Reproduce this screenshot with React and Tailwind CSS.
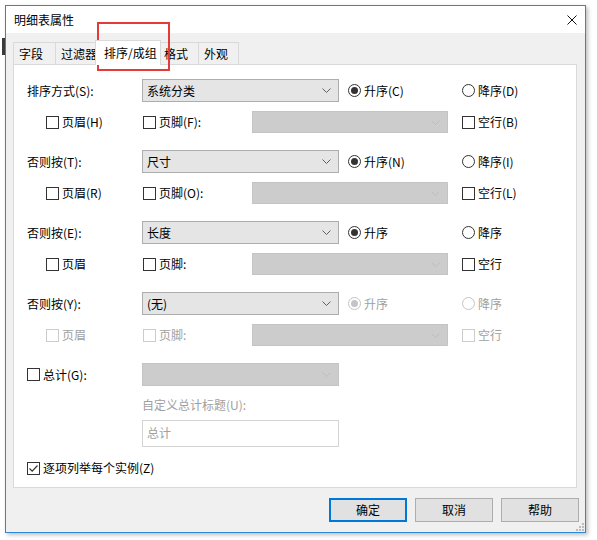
import React from 'react';

function Chevron({ light }) {
  return (
    <svg width="9" height="5" viewBox="0 0 9 5" className="shrink-0">
      <path d="M0.5 0.5 L4.5 4.5 L8.5 0.5" fill="none" stroke={light ? '#bdbdbd' : '#606060'} strokeWidth="1" />
    </svg>
  );
}

function Select({ value, width, disabled, height = 'h-[23px]' }) {
  return (
    <div
      className={`${width} ${height} flex items-center justify-between pl-[4px] pr-[7px] border ${
        disabled ? 'bg-[#cccccc] border-[#c4c4c4]' : 'bg-[#e5e5e5] border-[#adadad]'
      }`}
    >
      <span>{value}</span>
      <Chevron light={disabled} />
    </div>
  );
}

function Check({ label, checked, disabled }) {
  return (
    <span className={`flex items-center gap-[3px] whitespace-nowrap ${disabled ? 'text-[#a0a0a0]' : 'text-black'}`}>
      <span
        className={`w-[13px] h-[13px] border bg-white flex items-center justify-center shrink-0 ${
          disabled ? 'border-[#cccccc]' : 'border-[#333333]'
        }`}
      >
        {checked && (
          <svg width="11" height="11" viewBox="0 0 11 11">
            <path d="M1.5 5.5 L4.2 8.2 L9.5 2.5" fill="none" stroke="#333333" strokeWidth="1.2" />
          </svg>
        )}
      </span>
      <span>{label}</span>
    </span>
  );
}

function Radio({ label, checked, disabled }) {
  return (
    <span className={`flex items-center gap-[3px] whitespace-nowrap ${disabled ? 'text-[#a0a0a0]' : 'text-black'}`}>
      <span
        className={`w-[13px] h-[13px] rounded-full border bg-white flex items-center justify-center shrink-0 ${
          disabled ? 'border-[#c4c4c4]' : 'border-[#333333]'
        }`}
      >
        {checked && (
          <span className={`w-[7px] h-[7px] rounded-full ${disabled ? 'bg-[#c4c4c4]' : 'bg-[#333333]'}`} />
        )}
      </span>
      <span>{label}</span>
    </span>
  );
}

function Section({ label, value, asc, desc, header, footer, blank, dim }) {
  return (
    <div>
      <div className="flex items-center h-[23px]">
        <span className="w-[115px]">{label}</span>
        <Select value={value} width="w-[197px]" />
        <span className="w-[9px]" />
        <span className="w-[114px]">
          <Radio label={asc} checked disabled={dim} />
        </span>
        <Radio label={desc} disabled={dim} />
      </div>
      <div className="flex items-center h-[22px] mt-[9px]">
        <span className="w-[19px]" />
        <span className="w-[97px]">
          <Check label={header} disabled={dim} />
        </span>
        <span className="w-[109px]">
          <Check label={footer} disabled={dim} />
        </span>
        <Select width="w-[196px]" height="h-[22px]" disabled />
        <span className="w-[14px]" />
        <Check label={blank} disabled={dim} />
      </div>
    </div>
  );
}

const sections = [
  { label: '排序方式(S):', value: '系统分类', asc: '升序(C)', desc: '降序(D)', header: '页眉(H)', footer: '页脚(F):', blank: '空行(B)' },
  { label: '否则按(T):', value: '尺寸', asc: '升序(N)', desc: '降序(I)', header: '页眉(R)', footer: '页脚(O):', blank: '空行(L)' },
  { label: '否则按(E):', value: '长度', asc: '升序', desc: '降序', header: '页眉', footer: '页脚:', blank: '空行' },
  { label: '否则按(Y):', value: '(无)', asc: '升序', desc: '降序', header: '页眉', footer: '页脚:', blank: '空行', dim: true },
];

const tabs = [
  { name: '字段', w: 'w-[43px]' },
  { name: '过滤器', w: 'w-[42px]' },
  { name: '排序/成组', w: 'w-[66px]', active: true },
  { name: '格式', w: 'w-[41px]' },
  { name: '外观', w: 'w-[41px]' },
];

export default function App() {
  return (
    <div className="relative w-[597px] h-[540px] bg-white overflow-hidden text-[12px] leading-none text-black font-['Noto_Sans_CJK_SC','Microsoft_YaHei',sans-serif]">
      {/* window behind */}
      <div className="absolute left-[2px] top-[38px] w-[3px] h-[17px] bg-[#3a3a3a]" />

      <div className="ml-[5px] mt-[5px] w-[581px] h-[528px] border border-[#2b88d8] bg-[#f0f0f0] flex flex-col shadow-[2px_2px_4px_rgba(0,0,0,0.25)]">
        {/* title bar */}
        <div className="h-[27px] bg-white flex items-center justify-between pl-[8px] pr-[8px]">
          <span>明细表属性</span>
          <svg width="10" height="10" viewBox="0 0 10 10">
            <path d="M0.5 0.5 L9.5 9.5 M9.5 0.5 L0.5 9.5" stroke="#111" strokeWidth="1" />
          </svg>
        </div>

        <div className="flex flex-col pl-[7px] pr-[8px] pt-[7px]">
          {/* tabs */}
          <div className="flex items-end h-[24px]">
            {tabs.map((t) =>
              t.active ? (
                <div
                  key={t.name}
                  className={`${t.w} -mx-[2px] h-[25px] -mb-px relative z-10 bg-white border border-b-0 border-[#d9d9d9] flex items-center pl-[8px] whitespace-nowrap`}
                >
                  {t.name}
                </div>
              ) : (
                <div
                  key={t.name}
                  className={`${t.w} h-[22px] bg-[#f0f0f0] border border-b-0 border-[#d9d9d9] -ml-px first:ml-0 flex items-center pl-[5px] whitespace-nowrap overflow-hidden`}
                >
                  {t.name}
                </div>
              )
            )}
          </div>

          {/* panel */}
          <div className="h-[424px] bg-white border border-[#d9d9d9] pt-[14px] pl-[13px]">
            <div className="flex flex-col gap-[17px]">
              {sections.map((s) => (
                <Section key={s.label} {...s} />
              ))}
            </div>

            <div className="flex items-center h-[23px] mt-[17px]">
              <span className="w-[115px]">
                <Check label="总计(G):" />
              </span>
              <Select width="w-[197px]" disabled />
            </div>

            <div className="ml-[115px] mt-[12px] h-[14px] flex items-center text-[#a0a0a0]">
              自定义总计标题(U):
            </div>

            <div className="ml-[115px] mt-[8px] w-[197px] h-[27px] border border-[#d4d4d4] bg-white pl-[4px] pt-[6px] text-[#a0a0a0]">
              总计
            </div>

            <div className="mt-[13px] h-[16px] flex items-center">
              <Check label="逐项列举每个实例(Z)" checked />
            </div>
          </div>

          {/* buttons */}
          <div className="flex justify-end gap-[8px] mt-[10px] mr-[-2px]">
            <button className="w-[78px] h-[24px] bg-[#e1e1e1] border-2 border-[#0078d7]">确定</button>
            <button className="w-[78px] h-[24px] bg-[#e1e1e1] border border-[#adadad]">取消</button>
            <button className="w-[78px] h-[24px] bg-[#e1e1e1] border border-[#adadad]">帮助</button>
          </div>
        </div>

        <div className="flex-1 flex justify-end items-end pr-[1px] pb-[1px]">
          <svg width="8" height="8" viewBox="0 0 8 8">
            <rect x="6" y="0" width="2" height="2" fill="#bcbcbc" />
            <rect x="3" y="3" width="2" height="2" fill="#bcbcbc" />
            <rect x="6" y="3" width="2" height="2" fill="#bcbcbc" />
            <rect x="0" y="6" width="2" height="2" fill="#bcbcbc" />
            <rect x="3" y="6" width="2" height="2" fill="#bcbcbc" />
            <rect x="6" y="6" width="2" height="2" fill="#bcbcbc" />
          </svg>
        </div>
      </div>

      {/* annotation */}
      <div className="absolute left-[97px] top-[22px] w-[73px] h-[49px] border-2 border-[#e53a3a]" />
    </div>
  );
}
